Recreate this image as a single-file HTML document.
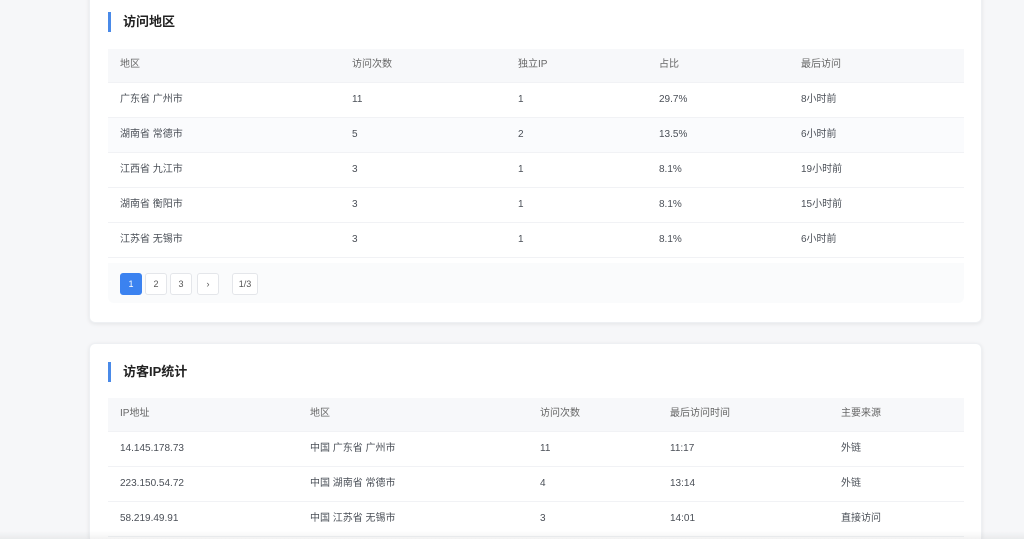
<!DOCTYPE html>
<html><head><meta charset="utf-8"><style>
*{margin:0;padding:0;box-sizing:border-box}
html{width:1024px;height:539px;overflow:hidden}
body{width:1024px;height:539px;overflow:hidden;background:#f6f7f9;font-family:"Liberation Sans","Noto Sans CJK SC",sans-serif;color:#4a4f57;position:relative}
.card{position:absolute;left:89px;width:893px;background:#fff;border-radius:6px;box-shadow:0 1px 4px rgba(0,0,0,.08);border:1px solid #eef0f3}
.title{position:absolute;left:18px;font-size:13px;font-weight:bold;color:#222;height:20px;line-height:20px;padding-left:12px;border-left:3px solid #4a8ae8}
table{position:absolute;left:18px;width:856px;border-collapse:collapse;font-size:10px}
td,th{height:35px;line-height:14px;vertical-align:middle;text-align:left;font-weight:normal;padding-left:12px;border-bottom:1px solid #f1f2f5}
td span,th span{display:inline-block;height:14px;line-height:14px;vertical-align:top}
th{height:33px;background:#f7f8fa;color:#666}
tr.s td{background:#fafbfd}
.pg{position:absolute;left:18px;width:856px;height:40px;background:#fafbfc;border-radius:0 0 6px 6px}
.b{position:absolute;top:10px;height:22px;border:1px solid #e4e6ea;border-radius:3px;background:#fff;font-size:9px;text-align:center;line-height:20px;color:#555}
</style></head><body>
<div class="card" style="top:-10px;height:333px">
<div class="title" style="top:21px">访问地区</div>
<table style="top:58px">
<tr><th style="width:232px">地区</th><th style="width:166px">访问次数</th><th style="width:141px">独立IP</th><th style="width:142px">占比</th><th>最后访问</th></tr>
<tr><td>广东省 广州市</td><td>11</td><td>1</td><td>29.7%</td><td>8小时前</td></tr>
<tr class="s"><td>湖南省 常德市</td><td>5</td><td>2</td><td>13.5%</td><td>6小时前</td></tr>
<tr><td>江西省 九江市</td><td>3</td><td>1</td><td>8.1%</td><td>19小时前</td></tr>
<tr><td>湖南省 衡阳市</td><td>3</td><td>1</td><td>8.1%</td><td>15小时前</td></tr>
<tr><td>江苏省 无锡市</td><td>3</td><td>1</td><td>8.1%</td><td>6小时前</td></tr>
</table>
<div class="pg" style="top:272px">
<div class="b" style="left:12px;width:22px;background:#3b82f0;border-color:#3b82f0;color:#fff">1</div>
<div class="b" style="left:37px;width:22px">2</div>
<div class="b" style="left:62px;width:22px">3</div>
<div class="b" style="left:89px;width:22px">›</div>
<div class="b" style="left:124px;width:26px">1/3</div>
</div>
</div>
<div class="card" style="top:343px;height:196px;border-bottom:none;border-radius:6px 6px 0 0">
<div class="title" style="top:18px">访客IP统计</div>
<table style="top:54px">
<tr><th style="width:190px">IP地址</th><th style="width:230px">地区</th><th style="width:130px">访问次数</th><th style="width:171px">最后访问时间</th><th>主要来源</th></tr>
<tr><td>14.145.178.73</td><td>中国 广东省 广州市</td><td>11</td><td>11:17</td><td>外链</td></tr>
<tr><td>223.150.54.72</td><td>中国 湖南省 常德市</td><td>4</td><td>13:14</td><td>外链</td></tr>
<tr><td>58.219.49.91</td><td>中国 江苏省 无锡市</td><td>3</td><td>14:01</td><td>直接访问</td></tr>
</table>
</div>
<div style="position:absolute;left:0;top:531px;width:1024px;height:8px;background:linear-gradient(rgba(0,0,0,0),rgba(0,0,0,.05))"></div>
</body></html>
